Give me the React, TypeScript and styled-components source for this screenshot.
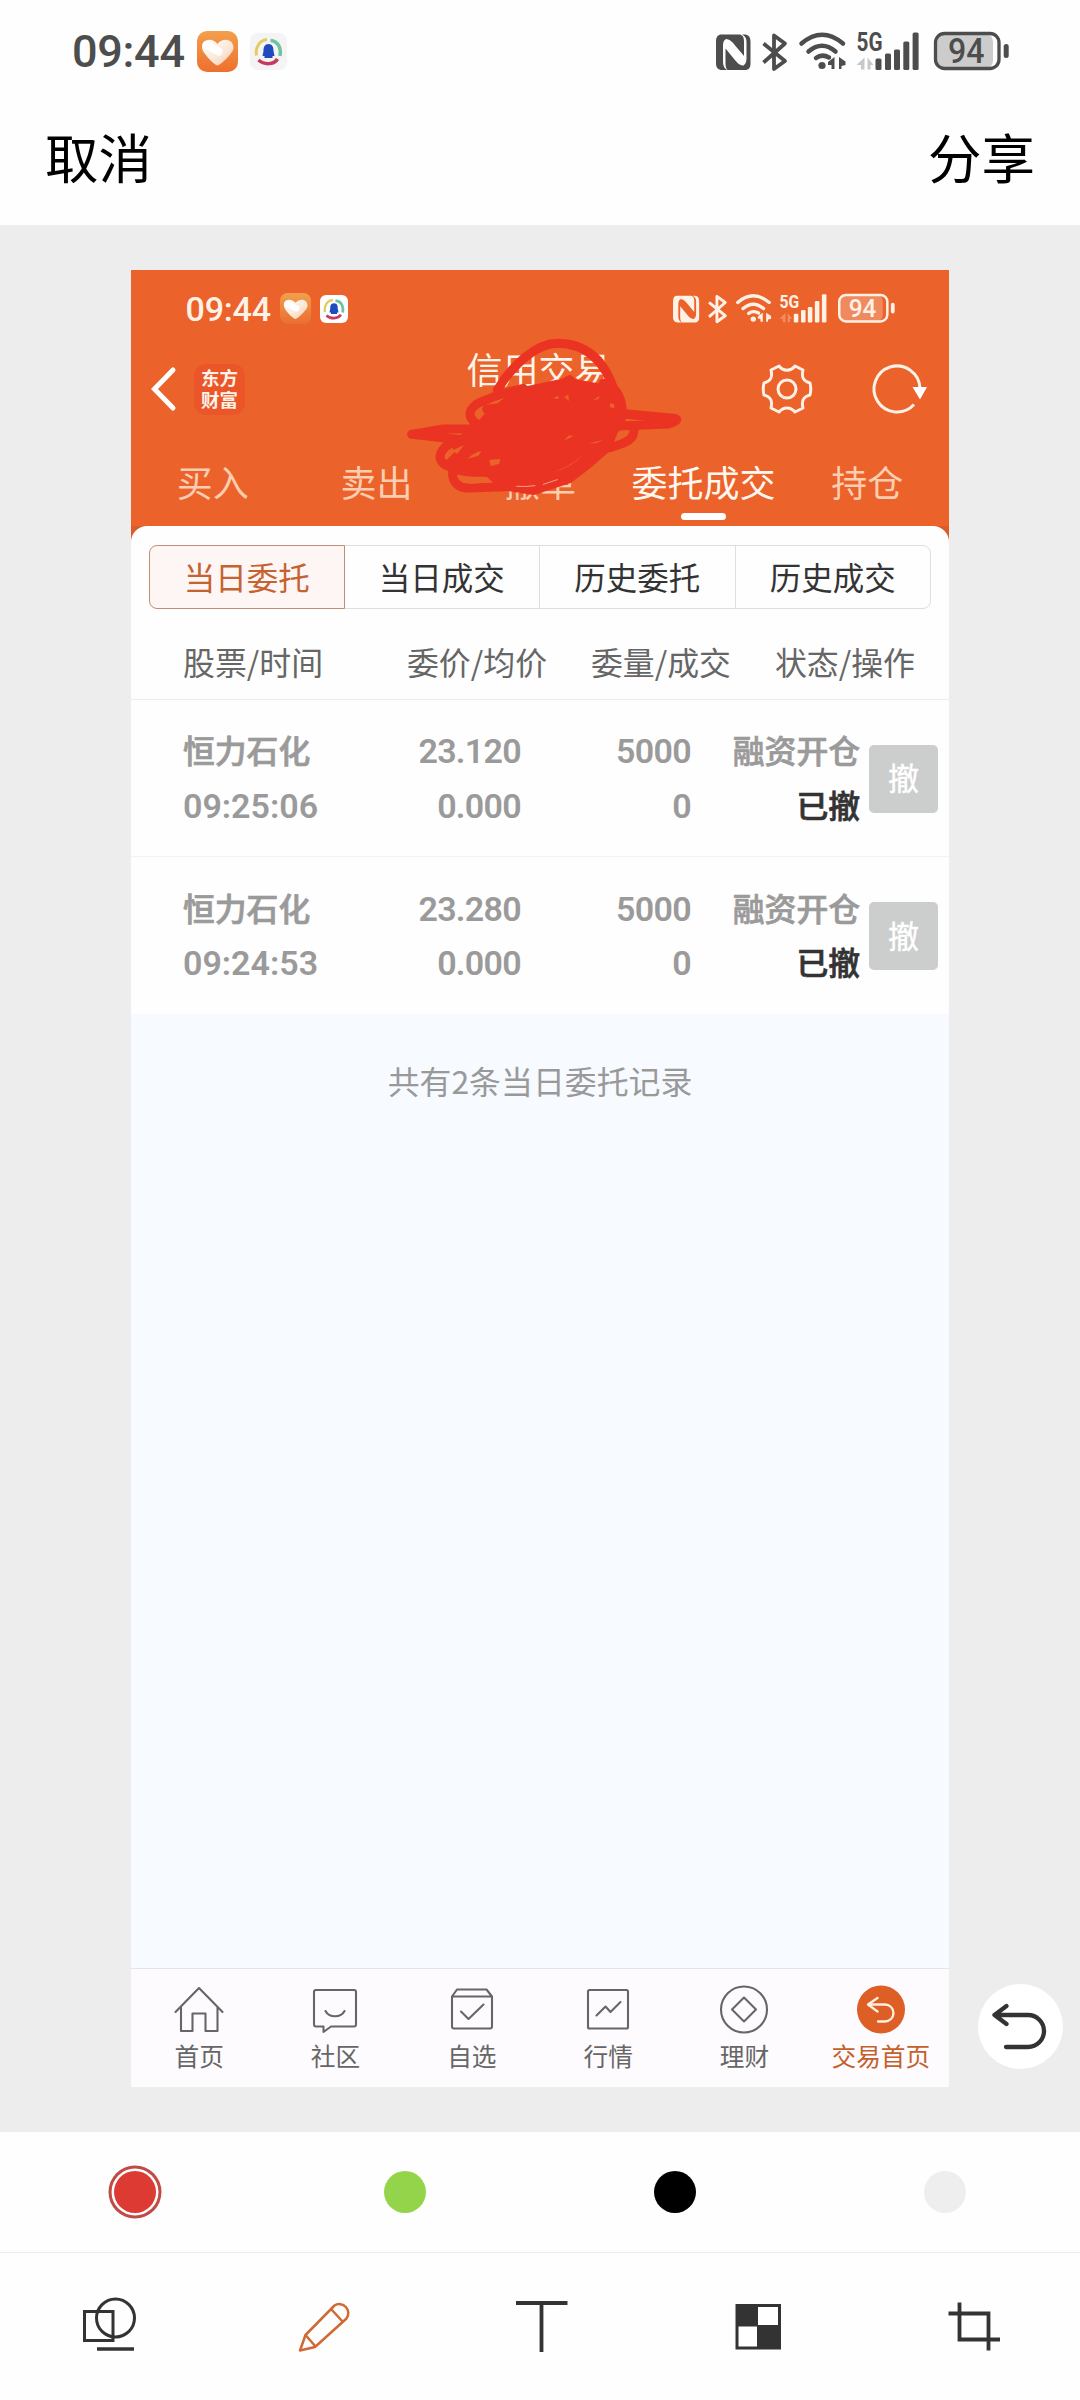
import React from "react";
import styled, { createGlobalStyle } from "styled-components";

const cjk = `"Noto Sans CJK SC", "Noto Sans", sans-serif`;
const digits = `Roboto, "Noto Sans CJK SC", sans-serif`;
const ORANGE = "#eb622a";

const GlobalStyle = createGlobalStyle`
  body { margin: 0; background: #fff; }
  * { box-sizing: border-box; }
  svg { display: block; flex: none; overflow: visible; }
`;

const Screen = styled.div`
  width: 1080px;
  height: 2400px;
  display: flex;
  flex-direction: column;
  background: #fefefe;
  font-family: ${cjk};
  overflow: hidden;
`;

/* ---------- status bar ---------- */
const StatusRow = styled.div<{ $k: number; $color: string }>`
  display: flex;
  align-items: center;
  height: ${(p) => 102 * p.$k}px;
  padding: 0 ${(p) => 70 * p.$k}px 0 ${(p) => 72 * p.$k}px;
  color: ${(p) => p.$color};
  flex: none;
`;
const Clock = styled.div<{ $k: number }>`
  width: ${(p) => 125 * p.$k}px;
  font: 500 ${(p) => 45 * p.$k}px/1 ${digits};
  letter-spacing: ${(p) => -0.3 * p.$k}px;
  white-space: nowrap;
`;
const StatusSpacer = styled.div`
  flex: 1;
`;
const BadgeGap = styled.div<{ $k: number }>`
  width: ${(p) => 12 * p.$k}px;
`;

const StatusBar = ({ k, color, dark }: { k: number; color: string; dark?: boolean }) => (
  <StatusRow $k={k} $color={color}>
    <Clock $k={k}>09:44</Clock>
    <svg width={41 * k} height={41 * k} viewBox="0 0 41 41">
      <defs>
        <linearGradient id={"hg" + k} x1="0" y1="0" x2="0" y2="1">
          <stop offset="0" stopColor="#f2a04c" />
          <stop offset="1" stopColor={dark ? "#e96e32" : "#ee6f2e"} />
        </linearGradient>
        <linearGradient id={"hh" + k} x1="0" y1="0" x2="1" y2="1">
          <stop offset="0" stopColor="#fff" />
          <stop offset="0.6" stopColor="#fbe6d6" />
          <stop offset="1" stopColor="#f6c59e" />
        </linearGradient>
      </defs>
      <rect width="41" height="41" rx="10" fill={`url(#hg${k})`} />
      <path d="M20.500 34.500C18 34.500 5 22 5 16.500C5 8 15 6 20.500 13C26 6 36.500 8 36.500 17C36.500 22 23 34.500 20.500 34.500Z" fill={`url(#hh${k})`} />
      <path d="M9.500 14L21.500 20.500" stroke="#fff" strokeWidth="8" strokeLinecap="round" />
    </svg>
    <BadgeGap $k={k} />
    <svg width={37 * k} height={37 * k} viewBox="0 0 37 37">
      <rect width="37" height="37" rx="8" fill={dark ? "#fff" : "#f4f4f4"} />
      <path d="M6.500 22.500C5 14 10 7 17 6.500" stroke="#e3cb62" strokeWidth="3" fill="none" />
      <path d="M20.500 7.500C28 8 31.500 15 30 23" stroke="#6cc4a2" strokeWidth="3.500" fill="none" />
      <path d="M8.500 27C14 32 24 32 27.500 26" stroke="#c53a5e" strokeWidth="3.500" fill="none" />
      <path d="M18.500 11C23 11 23.500 15 23.500 18L24.500 23H22.500V25H14.500V23H12.500L13.500 18C13.500 15 14 11 18.500 11Z" fill="#1f4bbd" />
    </svg>
    <StatusSpacer />
    <svg width={294 * k} height={41 * k} viewBox="716 30.500 294 41" fill="currentColor">
      <path d="M721.500 34H740C743 35 744 37 744 41V55.500L735.500 45.500C732 40.500 729 39 726 38.500C723.500 40 723 42 723 46V61C723 65 724 67.500 727 69.500H722C718 69.500 716 67 716 63V41C716 36.500 718 34 721.500 34Z M745 69.500H727.500C726 68 725.500 66 725.500 62V48L734.500 59C738 63.500 740.500 65 743.500 65C746 63 746.500 61 746.500 57V42C746.500 38 745.500 36 742 34H744C748.500 34 750.500 36.500 750.500 41V63C750.500 67.500 748.500 69.500 745 69.500Z" />
      <path d="M763.500 43L785 60.500L774 68.500V35L785 43L763.500 62" fill="none" stroke="currentColor" strokeWidth="3.800" strokeLinejoin="round" />
      <g fill="none" stroke="currentColor" strokeWidth="4.500" strokeLinecap="round">
        <path d="M801.500 43Q822 25.500 843 43" />
        <path d="M808.500 51Q822 39.500 835.500 51" />
        <path d="M816 57.500Q822 53 829 57" />
      </g>
      <circle cx="822" cy="65" r="3.600" />
      <path d="M834.500 56.500V68.500H831.500V64.500H828V61.500ZM839 56.500L845.500 61V64.500L841.500 65.500V68.500H839Z" />
      <text x="856.500" y="50.500" fontFamily="Roboto, sans-serif" fontWeight="700" fontSize="25" textLength="26" lengthAdjust="spacingAndGlyphs">5G</text>
      <path opacity="0.300" d="M864.500 57V69H861V64.500H856.500ZM867.500 57L873.500 64.500H870.500V69H867.500Z" />
      <rect x="875.500" y="58" width="6" height="11.500" rx="1.500" />
      <rect x="885" y="53" width="6" height="16.500" rx="1.500" />
      <rect x="894" y="49" width="6" height="20.500" rx="1.500" />
      <rect x="903.300" y="41" width="6" height="28.500" rx="1.500" />
      <rect x="912.600" y="32" width="6" height="37.500" rx="1.500" />
      <rect x="935.500" y="33" width="57.500" height="35" rx="8" opacity="0.280" />
      <rect x="935.500" y="33" width="63.500" height="35" rx="9" fill="none" stroke="currentColor" strokeWidth="3.300" />
      <rect x="1003.700" y="43.500" width="5" height="14" rx="2.500" />
      <text x="948" y="62.500" fontFamily="Roboto, sans-serif" fontWeight="500" fontSize="35" textLength="36.500" lengthAdjust="spacingAndGlyphs">94</text>
    </svg>
  </StatusRow>
);

/* ---------- editor chrome ---------- */
const EditorHeader = styled.header`
  display: flex;
  justify-content: space-between;
  height: 123px;
  padding: 17px 45px 0 45px;
  font-size: 53.500px;
  line-height: 74px;
  color: #000;
  flex: none;
`;
const Canvas = styled.main`
  position: relative;
  height: 1907px;
  padding: 45px 131px 0;
  background: #ededed;
  flex: none;
`;
const UndoButton = styled.button`
  position: absolute;
  right: 17px;
  bottom: 63px;
  width: 85px;
  height: 85px;
  border: 0;
  padding: 0;
  border-radius: 50%;
  background: #fff;
`;
const Palette = styled.div`
  display: grid;
  grid-template-columns: repeat(4, 1fr);
  place-items: center;
  height: 121px;
  flex: none;
  border-bottom: 1px solid #ebebeb;
`;
const Swatch = styled.div<{ $color: string; $ring?: boolean }>`
  width: 42px;
  height: 42px;
  border-radius: 50%;
  background: ${(p) => p.$color};
  box-shadow: ${(p) => (p.$ring ? "0 0 0 2.500px #fff, 0 0 0 5.500px #c24a45" : "none")};
`;
const Tools = styled.div`
  display: grid;
  grid-template-columns: repeat(5, 1fr);
  justify-items: center;
  padding-top: 41px;
  flex: 1;
`;

/* ---------- trading app shot ---------- */
const Shot = styled.section`
  display: flex;
  flex-direction: column;
  width: 818px;
  height: 1817px;
  background: #f7faff;
`;
const ShotTop = styled.div`
  position: relative;
  height: 256px;
  background: ${ORANGE};
  flex: none;
`;
const TitleBar = styled.div`
  display: flex;
  align-items: center;
  height: 84px;
  padding: 0 19px 0 19px;
`;
const Logo = styled.div`
  width: 51px;
  height: 51px;
  margin-left: 18px;
  padding-top: 2px;
  border-radius: 12px;
  background: #ea562a;
  color: #fff3e8;
  font-weight: 700;
  font-size: 18.500px;
  line-height: 22px;
  text-align: center;
`;
const Title = styled.h1`
  flex: 1;
  margin: 0 0 43px 71px;
  font-size: 36px;
  font-weight: 400;
  line-height: 40px;
  color: #fff3ea;
  text-align: center;
`;
const IconGap = styled.div`
  width: 57px;
  flex: none;
`;
const TopTabs = styled.nav`
  display: grid;
  grid-template-columns: repeat(5, 1fr);
`;
const TopTab = styled.div<{ $active?: boolean }>`
  display: flex;
  flex-direction: column;
  align-items: center;
  padding-top: 29px;
  font-size: 36px;
  line-height: 43px;
  white-space: nowrap;
  color: ${(p) => (p.$active ? "#fff8f0" : "#fccdb0")};
  &::after {
    content: "";
    width: 45px;
    height: 7px;
    margin-top: 10px;
    border-radius: 3.500px;
    background: ${(p) => (p.$active ? "#fff" : "transparent")};
  }
`;
const Scribble = styled.svg`
  position: absolute;
  left: 259px;
  top: 50px;
`;
const SheetBack = styled.div`
  background: #d95c2a;
  flex: none;
`;
const Sheet = styled.div`
  background: #fefefe;
  border-radius: 16px 16px 0 0;
  height: 488px;
`;
const Segments = styled.div`
  display: grid;
  grid-template-columns: repeat(4, 1fr);
  padding: 18.500px 18px 0;
`;
const Segment = styled.div<{ $active?: boolean }>`
  height: 64px;
  margin-left: -1px;
  border: 1px solid ${(p) => (p.$active ? "#c08e76" : "#dedede")};
  background: ${(p) => (p.$active ? "#fdf6f5" : "#fefefe")};
  color: ${(p) => (p.$active ? "#c5622f" : "#333")};
  position: relative;
  z-index: ${(p) => (p.$active ? 1 : 0)};
  font-size: 31.500px;
  line-height: 60px;
  text-align: center;
  &:first-child { border-radius: 8px 0 0 8px; margin-left: 0; }
  &:last-child { border-radius: 0 8px 8px 0; }
`;
const ColumnHeads = styled.div`
  display: flex;
  justify-content: space-between;
  height: 91px;
  padding: 30px 34px 0 52px;
  font-size: 31.900px;
  line-height: 44px;
  color: #666;
  border-bottom: 1px solid #ececec;
`;
const Head = styled.div<{ $ml?: number }>`
  margin-left: ${(p) => p.$ml ?? 0}px;
  white-space: nowrap;
`;
const Order = styled.div`
  display: grid;
  grid-template-columns: 180px 158px 170px 169px 69px;
  align-items: center;
  height: 157px;
  padding: 2px 11px 0 52px;
  border-bottom: 1px solid #f3f3f3;
  color: #9b9a9a;
  &:last-child { border-bottom: 0; }
`;
const Cell = styled.div<{ $end?: boolean }>`
  display: flex;
  flex-direction: column;
  align-items: ${(p) => (p.$end ? "flex-end" : "flex-start")};
`;
const Name = styled.div`
  margin: -2px 0 2px;
  font-size: 31.800px;
  font-weight: 500;
  -webkit-text-stroke: 0.700px currentColor;
  line-height: 54.500px;
  white-space: nowrap;
`;
const Status = styled(Name)`
  color: #333;
`;
const Num = styled.div<{ $tight?: boolean }>`
  font-family: ${digits};
  font-size: 34px;
  font-weight: 600;
  line-height: 54.500px;
  letter-spacing: ${(p) => (p.$tight ? "-0.700px" : "0")};
`;
const Revoke = styled.button`
  width: 69px;
  height: 68px;
  margin-left: 9px;
  padding: 0 0 4px;
  border: 0;
  border-radius: 5px;
  background: #cccecd;
  color: #fff;
  font: 400 31px/1 ${cjk};
  -webkit-text-stroke: 0.400px #fff;
`;
const Summary = styled.p`
  margin: 0;
  padding-top: 43px;
  flex: 1;
  font-size: 31.900px;
  line-height: 46px;
  text-align: center;
  color: #999;
`;
const BottomNav = styled.nav`
  display: grid;
  grid-template-columns: repeat(6, 1fr);
  height: 119px;
  border-top: 1px solid #e4e4e6;
  background: #fdfbfe;
  flex: none;
`;
const NavItem = styled.div<{ $active?: boolean }>`
  display: flex;
  flex-direction: column;
  align-items: center;
  padding-top: 15px;
  color: ${(p) => (p.$active ? "#c4602c" : "#666")};
  font-size: 24.700px;
  line-height: 40px;
  white-space: nowrap;
  svg { margin-bottom: 1px; }
`;

const NavIcon = ({ children }: { children: React.ReactNode }) => (
  <svg width="50" height="50" viewBox="-25 -25.500 50 50" fill="none" stroke="currentColor" strokeWidth="2.100" strokeLinecap="round" strokeLinejoin="round">
    {children}
  </svg>
);

const navItems = [
  { label: "首页", icon: <path d="M-23.500 2.500L0 -21.500L23.500 2.500M-18 -2V21.500H-6.500V4H6.500V21.500H18.500V-2" /> },
  { label: "社区", icon: <><path d="M-19 -19.500H19A2 2 0 0 1 21 -17.500V15A2 2 0 0 1 19 17H-4L-11.500 22.500V17H-19A2 2 0 0 1 -21 15V-17.500A2 2 0 0 1 -19 -19.500Z" /><path d="M-9.500 1.500C-6 8.500 6 8.500 9.500 1.500" /></> },
  { label: "自选", icon: <><path d="M-20 -13L-15 -20H14.500L20 -13V17A2 2 0 0 1 18 19H-18A2 2 0 0 1 -20 17ZM-20 -13H20" /><path d="M-11 2L-3.500 9.500L11.500 -5" /></> },
  { label: "行情", icon: <><rect x="-20" y="-19.500" width="40" height="38.500" rx="1.500" /><path d="M-11.500 6L-2.500 -3L2.500 2.500L12.500 -7.500" /></> },
  { label: "理财", icon: <><circle r="23" /><path d="M0 -12L12 0L0 12L-12 0Z" /></> },
  { label: "交易首页", active: true, icon: <><circle r="24" fill="#de5f26" stroke="none" /><path d="M-3.500 -11.500L-13 -5L-3.500 2M-13 -5H4A8.500 8.500 0 0 1 4 12H-3" stroke="#fff0e0" strokeWidth="2.300" /></> },
];

const orders = [
  { name: "恒力石化", time: "09:25:06", price: "23.120" },
  { name: "恒力石化", time: "09:24:53", price: "23.280" },
];

const ToolIcon = ({ children, color = "#333" }: { children: React.ReactNode; color?: string }) => (
  <svg width="64" height="64" viewBox="-32 -32 64 64" fill="none" stroke={color} strokeWidth="3">
    {children}
  </svg>
);

export default function App() {
  return (
    <>
      <GlobalStyle />
      <Screen>
        <StatusBar k={1} color="#4d4d4d" />
        <EditorHeader>
          <span>取消</span>
          <span>分享</span>
        </EditorHeader>
        <Canvas>
          <Shot>
            <ShotTop>
              <StatusBar k={0.7574} color="#fff1e6" dark />
              <TitleBar>
                <svg width="26" height="44" viewBox="0 0 26 44" fill="none" stroke="#fff" strokeWidth="5" strokeLinecap="round">
                  <path d="M23 3L4.500 22L23 41" />
                </svg>
                <Logo>东方<br />财富</Logo>
                <Title>信用交易</Title>
                <svg width="52" height="52" viewBox="-26 -26 52 52" fill="none" stroke="#fff1e6" strokeWidth="3" strokeLinejoin="round">
                  <path d="M-8 -23C-4 -17.500 4 -17.500 8 -23L16 -19C14 -11 17 -7.500 23 -6Q24.500 0 23 6C17 7.500 14 11 16 19L8 23C4 17.500 -4 17.500 -8 23L-16 19C-14 11 -17 7.500 -23 6Q-24.500 0 -23 -6C-17 -7.500 -14 -11 -16 -19Z" />
                  <circle r="9" />
                </svg>
                <IconGap />
                <svg width="60" height="52" viewBox="-27 -26 60 52" fill="none" stroke="#fff1e6" strokeWidth="3">
                  <path d="M17 15.500A23 23 0 1 1 23 -1" />
                  <path d="M15.500 -2H30L23 10.500Z" fill="#fff" stroke="none" />
                </svg>
              </TitleBar>
              <TopTabs>
                <TopTab>买入</TopTab>
                <TopTab>卖出</TopTab>
                <TopTab>撤单</TopTab>
                <TopTab $active>委托成交</TopTab>
                <TopTab>持仓</TopTab>
              </TopTabs>
              <Scribble width="310" height="190" viewBox="0 0 930 570" fill="none" stroke="#ea3323" strokeWidth="27" strokeLinecap="round" strokeLinejoin="round">
                <path d="M322 210C370 130 440 72 500 70C600 70 650 135 675 220C690 240 698 255 697 275" />
                <path d="M260 312C230 290 235 265 270 247Q330 220 400 205" />
                <path d="M65 343L160 327H270M65 343L240 362M160 327L105 342" />
                <path d="M690 280L850 295C868 297 862 303 835 312L690 318M700 282L860 298" />
                <path d="M732 322C735 360 710 368 660 383" />
                <path d="M188 455C185 490 210 506 240 504L345 500" />
                <path d="M215 360C160 370 140 405 155 425C175 450 210 440 240 400" />
                <path d="M290 268L340 262M640 190Q690 205 695 260" />
                <path fill="#ea3323" strokeWidth="14" d="M340 245L400 208L520 182L540 172L555 185L640 200L700 250L700 300L675 340L655 388L595 440L540 482L430 518L350 505L300 475L195 455L165 435L200 400L190 365L250 330L290 285Z" />
                <g fill={ORANGE} stroke="none">
                  <path d="M488 235L505 227V237ZM522 230L535 224L537 243ZM608 240L630 228L625 238ZM660 250L672 252L674 264L660 262Z" />
                  <path d="M522 362L537 346L551 348ZM594 371L641 359L620 369ZM684 335L706 331L680 358Z" />
                  <path d="M183 393L222 375L202 401ZM232 417Q250 398 274 393L266 407ZM298 419L331 417L328 431L302 439Z" />
                  <path d="M202 469Q240 471 290 470L307 486L250 491Q208 492 202 469ZM482 457Q535 445 579 405Q540 448 482 457Z" />
                </g>
                <path stroke="#fbd5bf" strokeWidth="2" d="M380 499Q410 501 435 497M460 493L502 479" />
              </Scribble>
            </ShotTop>
            <SheetBack>
              <Sheet>
                <Segments>
                  <Segment $active>当日委托</Segment>
                  <Segment>当日成交</Segment>
                  <Segment>历史委托</Segment>
                  <Segment>历史成交</Segment>
                </Segments>
                <ColumnHeads>
                  <Head>股票/时间</Head>
                  <Head $ml={40}>委价/均价</Head>
                  <Head>委量/成交</Head>
                  <Head>状态/操作</Head>
                </ColumnHeads>
                <div>
                  {orders.map((o) => (
                    <Order key={o.time}>
                      <Cell>
                        <Name>{o.name}</Name>
                        <Num>{o.time}</Num>
                      </Cell>
                      <Cell $end>
                        <Num $tight>{o.price}</Num>
                        <Num $tight>0.000</Num>
                      </Cell>
                      <Cell $end>
                        <Num $tight>5000</Num>
                        <Num $tight>0</Num>
                      </Cell>
                      <Cell $end>
                        <Name>融资开仓</Name>
                        <Status>已撤</Status>
                      </Cell>
                      <Revoke>撤</Revoke>
                    </Order>
                  ))}
                </div>
              </Sheet>
            </SheetBack>
            <Summary>共有2条当日委托记录</Summary>
            <BottomNav>
              {navItems.map((n) => (
                <NavItem key={n.label} $active={n.active}>
                  <NavIcon>{n.icon}</NavIcon>
                  {n.label}
                </NavItem>
              ))}
            </BottomNav>
          </Shot>
          <UndoButton>
            <svg width="85" height="85" viewBox="-42.500 -42.500 85 85" fill="none" stroke="#333" strokeWidth="4.300" strokeLinecap="round" strokeLinejoin="round">
              <path d="M-14 -20.500L-26 -11.500L-14 -2.500M-26 -11.500H7.500A16 16 0 0 1 7.500 20.500H-14.500" />
            </svg>
          </UndoButton>
        </Canvas>
        <Palette>
          <Swatch $color="#de3a34" $ring />
          <Swatch $color="#94d44b" />
          <Swatch $color="#000" />
          <Swatch $color="#eeeeee" />
        </Palette>
        <Tools>
          <ToolIcon>
            <rect x="-23.500" y="-14.500" width="28.500" height="29" />
            <circle cx="7.500" cy="-8" r="19" />
            <path d="M-11 23H26" strokeWidth="3.500" />
          </ToolIcon>
          <ToolIcon color="#cf6a35">
            <g strokeWidth="2.500">
              <path d="M-18.500 9L10.500 -20.500A9 9 0 0 1 22.500 -7.500L-9 21L-24 24.500Z" strokeLinejoin="round" />
              <path d="M7 -17L19 -4M-18.500 9L-8 21" />
            </g>
          </ToolIcon>
          <ToolIcon>
            <path d="M-24 -23H27.500M1.500 -23V26" strokeWidth="3.800" />
          </ToolIcon>
          <ToolIcon>
            <rect x="-20.500" y="-22" width="45.500" height="45.500" fill="#333" stroke="none" />
            <path d="M2 -19H22V-1H2ZM-17.500 0.500H1V20.500H-17.500Z" fill="#fff" stroke="none" />
          </ToolIcon>
          <ToolIcon>
            <path d="M-12.500 -23.500V13.500H28M-23.500 -12.500H16.500V24.500" strokeWidth="3.800" />
          </ToolIcon>
        </Tools>
      </Screen>
    </>
  );
}
